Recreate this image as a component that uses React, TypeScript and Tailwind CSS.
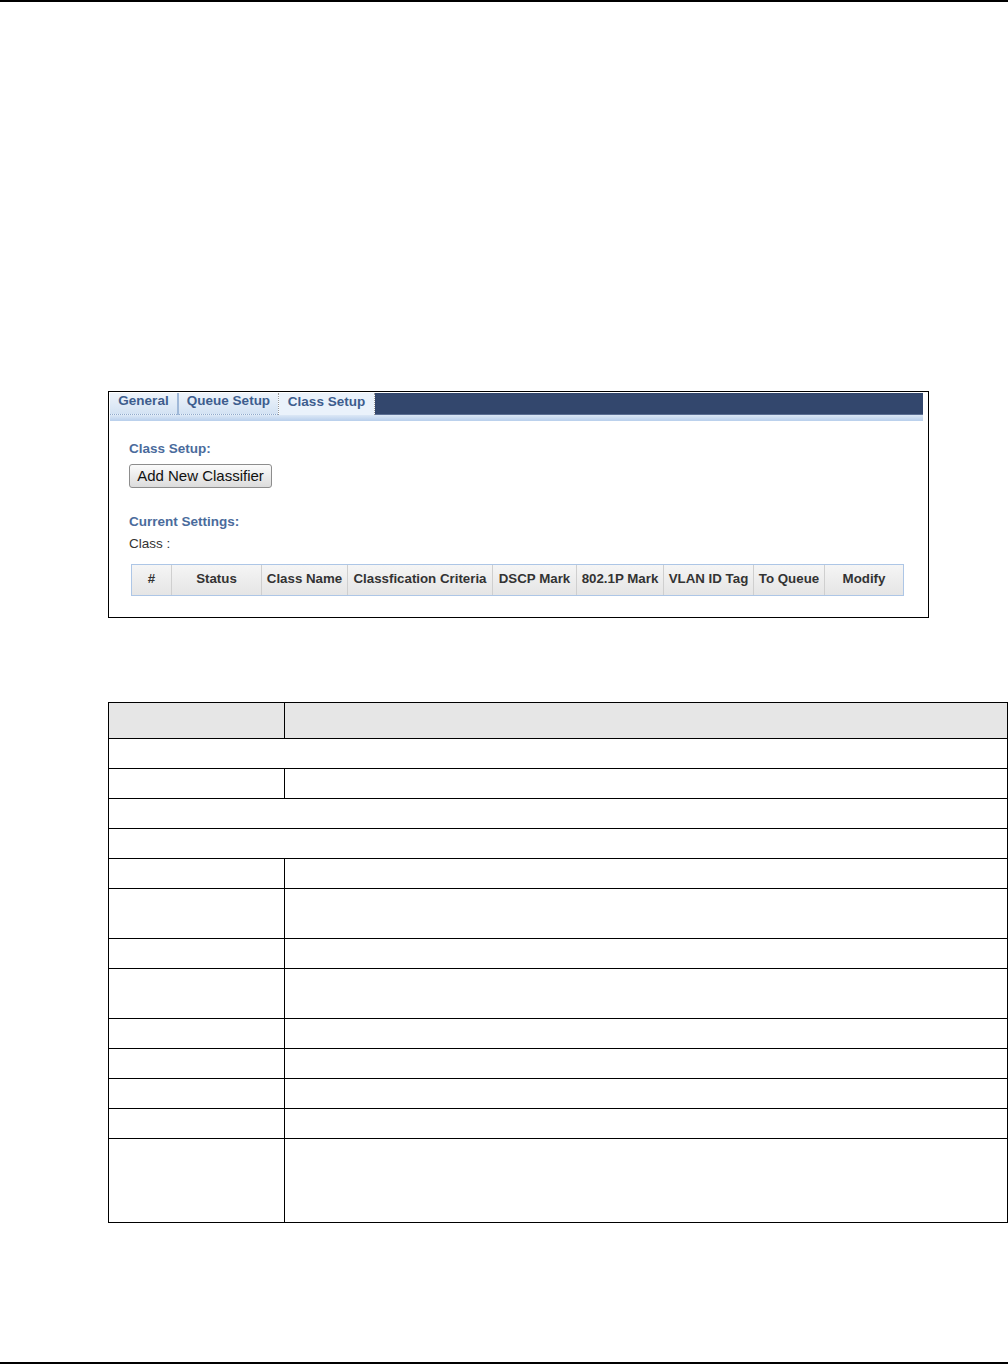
// page: Class Setup screenshot + empty field table
const columns = [
  { label: "#", w: "w-[40px]" },
  { label: "Status", w: "w-[90px]" },
  { label: "Class Name", w: "w-[86px]" },
  { label: "Classfication Criteria", w: "w-[145px]" },
  { label: "DSCP Mark", w: "w-[84px]" },
  { label: "802.1P Mark", w: "w-[87px]" },
  { label: "VLAN ID Tag", w: "w-[90px]" },
  { label: "To Queue", w: "w-[71px]" },
  { label: "Modify", w: "flex-1" },
]

// lower table rows: height incl. bottom border, span = one merged cell
const rows: { h: string; span?: boolean; head?: boolean }[] = [
  { h: "h-[36px]", head: true },
  { h: "h-[30px]", span: true },
  { h: "h-[30px]" },
  { h: "h-[30px]", span: true },
  { h: "h-[30px]", span: true },
  { h: "h-[30px]" },
  { h: "h-[50px]" },
  { h: "h-[30px]" },
  { h: "h-[50px]" },
  { h: "h-[30px]" },
  { h: "h-[30px]" },
  { h: "h-[30px]" },
  { h: "h-[30px]" },
  { h: "h-[84px]" },
]

function TabBar() {
  return (
    <div className="pl-[1px] pt-[1px] w-[814px]">
      <div className="flex h-[22px]">
        <div className="w-[67px] bg-gradient-to-b from-[#eef4fb] to-[#d3e2f3] border-b border-dotted border-[#8fa9cc] flex items-center justify-center pb-[4px] text-[13.5px] font-bold text-[#3d5d8e]">
          General
        </div>
        <div className="w-[2px] bg-[#9fb8d8]" />
        <div className="w-[99px] bg-gradient-to-b from-[#eef4fb] to-[#d3e2f3] border-b border-dotted border-[#8fa9cc] flex items-center justify-center pb-[4px] text-[13.5px] font-bold text-[#3d5d8e]">
          Queue Setup
        </div>
        <div className="w-px border-l border-dotted border-[#9a9a9a]" />
        <div className="w-[95px] bg-[#eaf2fb] flex items-center justify-center pb-[3px] text-[13.5px] font-bold text-[#3d5d8e]">
          Class Setup
        </div>
        <div className="w-px border-l border-dotted border-[#9a9a9a]" />
        <div className="flex-1 bg-[#33476d] border-b border-[#5b6f94]" />
      </div>
      <div className="h-[6px] bg-gradient-to-b from-[#dce8f6] to-[#b8cfec]" />
    </div>
  )
}

function ClassTable() {
  return (
    <div className="mt-[12px] ml-[2px] w-[773px] h-[32px] border border-[#adc6e6] flex bg-gradient-to-b from-[#f5f5f5] to-[#e5e5e5]">
      {columns.map((c, i) => (
        <div
          key={c.label}
          className={`${c.w} flex items-center justify-center pb-[2px] text-[13.3px] font-bold text-[#333] whitespace-nowrap ${i < columns.length - 1 ? "border-r border-[#cfcfcf]" : ""}`}
        >
          {c.label}
        </div>
      ))}
    </div>
  )
}

export default function App() {
  return (
    <div className="w-[1008px] h-[1364px] bg-white flex flex-col font-['Liberation_Sans',Arial,sans-serif]">
      {/* top rule */}
      <div className="h-[2px] bg-black" />

      {/* SCREENSHOT BOX */}
      <div className="mt-[389px] ml-[108px] w-[821px] h-[227px] border border-black">
        <TabBar />
        <div className="pl-[20px]">
          <div className="mt-[20px] h-[16px] leading-[16px] text-[13.5px] font-bold text-[#4a6b9c]">Class Setup:</div>
          <button className="mt-[7px] h-[24px] w-[143px] pb-[2px] border border-[#8d8d8d] rounded-[3px] bg-gradient-to-b from-[#fbfbfb] to-[#dcdcdc] text-[15px] text-[#111] leading-none">
            Add New Classifier
          </button>
          <div className="mt-[26px] h-[16px] leading-[16px] text-[13.5px] font-bold text-[#4a6b9c]">Current Settings:</div>
          <div className="mt-[6px] h-[16px] leading-[16px] text-[13.5px] text-[#333]">Class :</div>
          <ClassTable />
        </div>
      </div>

      {/* FIELD TABLE */}
      <div className="mt-[84px] ml-[108px] w-[900px] border-t border-l border-black">
        {rows.map((r, i) => (
          <div key={i} className={`${r.h} flex border-b border-black ${r.head ? "bg-[#e6e6e6]" : ""}`}>
            {r.span ? (
              <div className="flex-1 border-r border-black" />
            ) : (
              <>
                <div className="w-[176px] border-r border-black" />
                <div className="flex-1 border-r border-black" />
              </>
            )}
          </div>
        ))}
      </div>

      <div className="flex-1" />
      {/* bottom rule */}
      <div className="h-[2px] bg-black" />
    </div>
  )
}
